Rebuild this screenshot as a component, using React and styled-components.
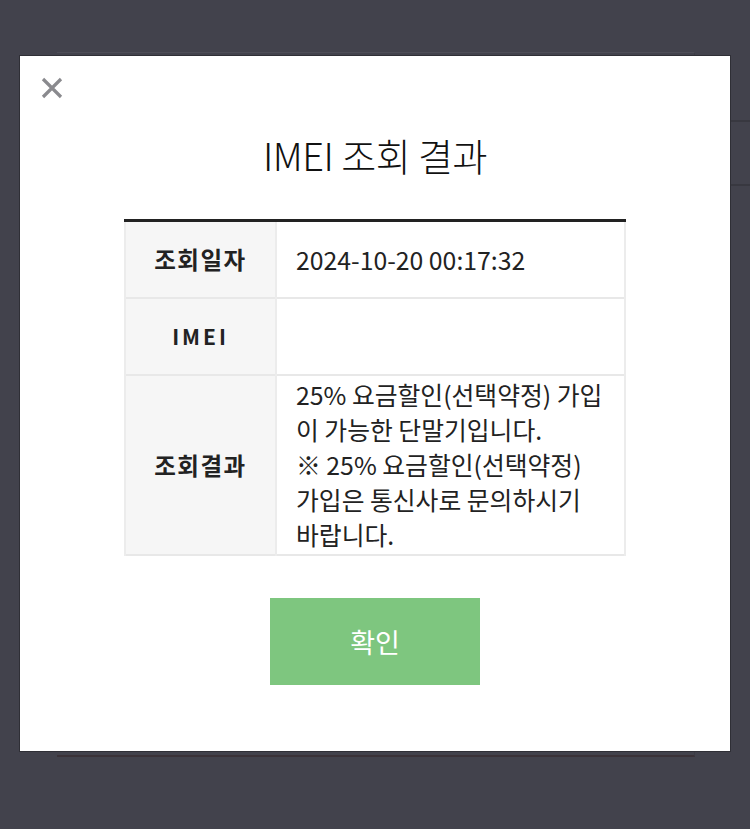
import styled, { createGlobalStyle } from "styled-components";

const GlobalStyle = createGlobalStyle`
  html, body {
    margin: 0;
    padding: 0;
    background: #42424c;
  }
  * {
    box-sizing: border-box;
  }
`;

const rows = [
  { label: "조회일자", value: ["2024-10-20 00:17:32"] },
  { label: "IMEI", value: [""], latin: true },
  {
    label: "조회결과",
    value: [
      "25% 요금할인(선택약정) 가입",
      "이 가능한 단말기입니다.",
      "※ 25% 요금할인(선택약정)",
      "가입은 통신사로 문의하시기",
      "바랍니다.",
    ],
  },
];

const CloseIcon = () => (
  <svg width="22" height="22" viewBox="0 0 22 22">
    <path d="M2 2 L20 20 M20 2 L2 20" stroke="#8a8a8e" strokeWidth="3.2" />
  </svg>
);

const App = () => {
  return (
    <Page>
      <GlobalStyle />
      <BackPanel>
        <SideLine />
        <SideLine />
      </BackPanel>
      <Modal>
        <CloseButton aria-label="닫기">
          <CloseIcon />
        </CloseButton>
        <Title>IMEI 조회 결과</Title>
        <Table>
          <tbody>
            {rows.map((row, i) => (
              <Row key={row.label} $tall={i === 2}>
                <Label $latin={row.latin}>{row.label}</Label>
                <Value>
                  {row.value.map((line, j) => (
                    <Line key={j}>{line}</Line>
                  ))}
                </Value>
              </Row>
            ))}
          </tbody>
        </Table>
        <ConfirmButton>확인</ConfirmButton>
      </Modal>
    </Page>
  );
};

const Page = styled.div`
  position: relative;
  min-height: 829px;
  overflow: hidden;
  padding-top: 52px;
  background: #42424c;
  font-family: "Noto Sans CJK KR", "Noto Sans", sans-serif;
`;

const BackPanel = styled.div`
  position: relative;
  margin-left: 57px;
  width: 638px;
  height: 705px;
  border-top: 1px solid #4d4d57;
  border-bottom: 2px solid #3a3238;
  border-right: 1px solid #3c3c45;
  display: flex;
  flex-direction: column;
  gap: 62px;
  padding-top: 67px;
`;

const SideLine = styled.div`
  margin-left: 674px;
  width: 60px;
  height: 2px;
  background: #383840;
`;

const Modal = styled.div`
  position: absolute;
  top: 55px;
  left: 19px;
  width: 712px;
  height: 697px;
  background: #ffffff;
  border: 1px solid #2f2f36;
  display: flex;
  flex-direction: column;
  align-items: center;
`;

const CloseButton = styled.button`
  align-self: flex-start;
  margin: 21px 0 0 21px;
  padding: 0;
  width: 22px;
  height: 22px;
  border: none;
  background: none;
  display: flex;
  cursor: pointer;
`;

const Title = styled.h2`
  margin: 33px 0 0;
  font-size: 38px;
  line-height: 46px;
  font-weight: 300;
  color: #111;
  letter-spacing: -0.5px;
`;

const Table = styled.table`
  margin-top: 41px;
  width: 502px;
  border-collapse: collapse;
  border-top: 3px solid #222;
`;

const Row = styled.tr`
  height: ${(p) => (p.$tall ? "180px" : "77px")};
  border-bottom: 2px solid #e8e8e8;
`;

const Label = styled.th`
  width: 151px;
  background: #f6f6f6;
  border-left: 2px solid #ececec;
  border-right: 2px solid #ececec;
  font-size: ${(p) => (p.$latin ? "21px" : "23.5px")};
  font-weight: 700;
  letter-spacing: ${(p) => (p.$latin ? "3px" : "1.5px")};
  color: #222;
  text-align: center;
  vertical-align: middle;
`;

const Value = styled.td`
  padding: 0 0 0 19px;
  border-right: 2px solid #ececec;
  vertical-align: middle;
  font-size: 24.8px;
  line-height: 35px;
  color: #222;
`;

const Line = styled.div`
  white-space: nowrap;
`;

const ConfirmButton = styled.button`
  margin-top: 42px;
  width: 210px;
  height: 87px;
  border: none;
  background: #7ec67f;
  color: #ffffff;
  font-family: "Noto Sans CJK KR", "Noto Sans", sans-serif;
  font-size: 27px;
  font-weight: 400;
  cursor: pointer;
`;

export default App;
